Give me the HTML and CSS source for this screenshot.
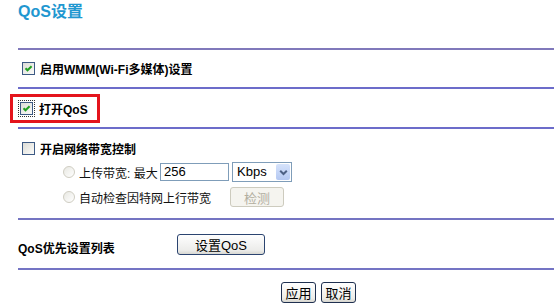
FILE: index.html
```html
<!doctype html>
<html lang="zh-CN">
  <head>
    <meta charset="UTF-8" />
    <title>QoS设置</title>
    <link rel="stylesheet" href="styles.css">
  </head>
  <body>
    <div class="page">
      <h1 class="title">QoS设置</h1>
      <div class="rule rule-first"></div>

      <div class="row row-check">
        <span class="cb checked"><svg width="11" height="11" viewBox="0 0 11 11"><path d="M2.5 5.2 L4.5 7.3 L8.6 3.2" fill="none" stroke="#21a121" stroke-width="2"/></svg></span>
        <span class="bold">启用WMM(Wi-Fi多媒体)设置</span>
      </div>
      <div class="rule"></div>

      <div class="row row-check row-qos">
        <span class="focus"><span class="cb checked"><svg width="11" height="11" viewBox="0 0 11 11"><path d="M2.5 5.2 L4.5 7.3 L8.6 3.2" fill="none" stroke="#21a121" stroke-width="2"/></svg></span></span>
        <span class="bold">打开QoS</span>
        <span class="mark"></span>
      </div>
      <div class="rule"></div>

      <div class="row row-check row-bw">
        <span class="cb"></span>
        <span class="bold">开启网络带宽控制</span>
      </div>
      <div class="row row-radio">
        <span class="radio"></span>
        <span class="radio-label">上传带宽: 最大</span>
        <span class="input">256</span>
        <span class="select">Kbps<span class="arrow"><svg width="9" height="7" viewBox="0 0 9 7"><path d="M1.2 1.8 L4.5 5 L7.8 1.8" fill="none" stroke="#4d6185" stroke-width="2"/></svg></span></span>
      </div>
      <div class="row row-radio row-auto">
        <span class="radio"></span>
        <span class="radio-label label-wide">自动检查因特网上行带宽</span>
        <span class="btn btn-disabled">检测</span>
      </div>
      <div class="rule rule-gap"></div>

      <div class="row row-list">
        <span class="bold list-label">QoS优先设置列表</span>
        <span class="btn btn-set">设置QoS</span>
      </div>
      <div class="rule rule-list"></div>

      <div class="row row-actions">
        <span class="btn btn-xp">应用</span>
        <span class="btn btn-xp">取消</span>
      </div>
    </div>
  </body>
</html>
```

FILE: styles.css
```css
html, body { margin: 0; padding: 0; background: #fff; }
body { font-family: "Liberation Sans", "Noto Sans CJK SC", sans-serif; font-size: 12px; color: #000; width: 554px; height: 308px; overflow: hidden; }
.page { padding-left: 18px; }
.title { margin: 0; padding-top: 2px; font-size: 16px; line-height: 20px; font-weight: bold; color: #1f97d0; }
.rule { height: 2px; background: #6c6cca; }
.rule-first { margin-top: 26px; background: #8079bb; }
.rule-gap { margin-top: 10px; background: #7474c2; }
.rule-list { margin-top: 11px; background: #7474c4; }
.row { display: flex; align-items: center; }
.bold { font-weight: bold; }
.row-check { height: 37px; }
.row-qos { height: 38px; position: relative; }
.row-bw { height: 26px; margin-top: 6px; }
.cb { width: 11px; height: 11px; border: 1px solid #3d5a84; background: linear-gradient(135deg, #dcdcd6, #fbfbf9); margin-left: 4px; margin-right: 5px; display: flex; }
.focus { outline: 1px dotted #333; outline-offset: -1px; padding: 2px; margin-left: 0; margin-right: 4px; }
.focus .cb { margin: 0; }
.mark { position: absolute; left: -8px; top: 5px; width: 84px; height: 23px; border: 3px solid #e4141c; }
.row-radio { height: 22px; padding-left: 45px; }
.row-auto { margin-top: 3px; }
.radio { width: 10px; height: 10px; border: 1px solid #cfcdc2; border-radius: 50%; background: linear-gradient(135deg, #e8e8e2, #fff); margin-right: 4px; }
.radio-label { width: 81px; color: #111; }
.label-wide { width: 151px; }
.input { width: 64px; height: 16px; border: 1px solid #7f9db9; font-size: 13px; line-height: 16px; padding-left: 3px; margin-right: 3px; }
.select { width: 54px; height: 18px; border: 1px solid #7f9db9; font-size: 13px; line-height: 18px; padding-left: 4px; display: flex; justify-content: space-between; }
.arrow { width: 14px; height: 16px; margin: 1px; background: linear-gradient(#d6e3fb, #b4c8f2); border-radius: 2px; display: flex; align-items: center; justify-content: center; }
.btn { display: flex; align-items: center; justify-content: center; font-size: 13px; box-sizing: border-box; }
.btn-disabled { width: 54px; height: 20px; border: 1px solid #cdcbbe; border-radius: 3px; background: #f5f4ef; color: #b2ae9f; }
.row-list { margin-top: 14px; align-items: flex-start; }
.list-label { width: 159px; margin-top: 7px; line-height: 16px; }
.btn-set { width: 88px; height: 21px; border: 1px solid #2b4470; border-radius: 3px; background: linear-gradient(#fefefe, #ececea 80%, #d8d8d2); }
.row-actions { margin-top: 12px; padding-left: 263px; gap: 5px; }
.btn-xp { width: 35px; height: 21px; border: 1px solid #1f3050; border-radius: 3px; background: linear-gradient(#fff, #eeede8 80%, #d6d5ce); }
```
